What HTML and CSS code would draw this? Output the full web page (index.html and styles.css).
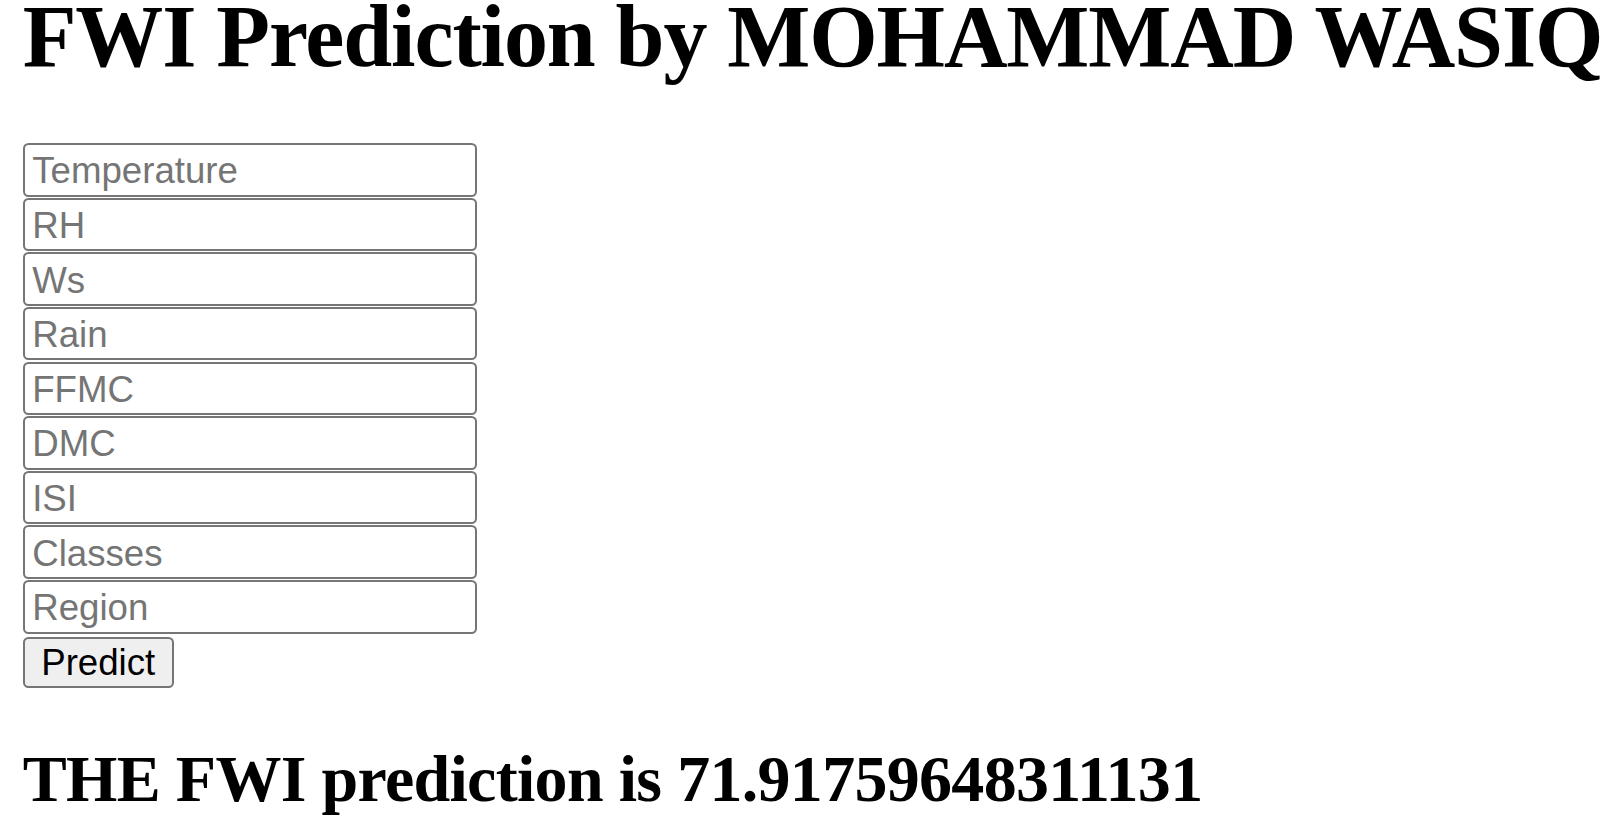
FILE: index.html
```html
<!DOCTYPE html>
<html>
<head>
<meta charset="utf-8">
<title>FWI Prediction</title>
<link rel="stylesheet" href="styles.css">
</head>
<body>
<h1 class="title">FWI Prediction by MOHAMMAD WASIQ</h1>
<form class="form">
  <input class="field" type="text" placeholder="Temperature">
  <input class="field" type="text" placeholder="RH">
  <input class="field" type="text" placeholder="Ws">
  <input class="field" type="text" placeholder="Rain">
  <input class="field" type="text" placeholder="FFMC">
  <input class="field" type="text" placeholder="DMC">
  <input class="field" type="text" placeholder="ISI">
  <input class="field" type="text" placeholder="Classes">
  <input class="field" type="text" placeholder="Region">
  <button class="btn" type="button">Predict</button>
</form>
<h2 class="result">THE FWI prediction is 71.91759648311131</h2>
</body>
</html>
```
FILE: styles.css
```css
html, body {
  margin: 0;
  padding: 0;
  background: #ffffff;
}
body {
  padding-left: 22.7px;
  font-family: "Liberation Serif", "Times New Roman", serif;
  color: #000;
}
.title {
  margin: 0 0 69px 0;
  font-size: 88px;
  line-height: 74px;
  font-weight: bold;
  letter-spacing: -1.1px;
  white-space: nowrap;
}
.form {
  display: flex;
  flex-direction: column;
  align-items: flex-start;
  gap: 1.15px;
  margin: 0;
}
.field {
  box-sizing: border-box;
  width: 454px;
  height: 53.5px;
  margin: 0;
  padding: 3px 5.5px 0 7.5px;
  border: 2.75px solid #767676;
  border-radius: 5.5px;
  background: #fff;
  font-family: "Liberation Sans", Arial, sans-serif;
  font-size: 36.67px;
  color: #000;
  outline: none;
}
.field::placeholder {
  color: #757575;
}
.btn {
  box-sizing: border-box;
  width: 151px;
  height: 51px;
  margin: 2.5px 0 0 0;
  padding: 0 16.5px;
  border: 2.75px solid #767676;
  border-radius: 5.5px;
  background: #efefef;
  font-family: "Liberation Sans", Arial, sans-serif;
  font-size: 36.67px;
  color: #000;
}
.result {
  margin: 53px 0 0 0;
  font-size: 66px;
  font-weight: bold;
  letter-spacing: -0.7px;
  white-space: nowrap;
}
```
